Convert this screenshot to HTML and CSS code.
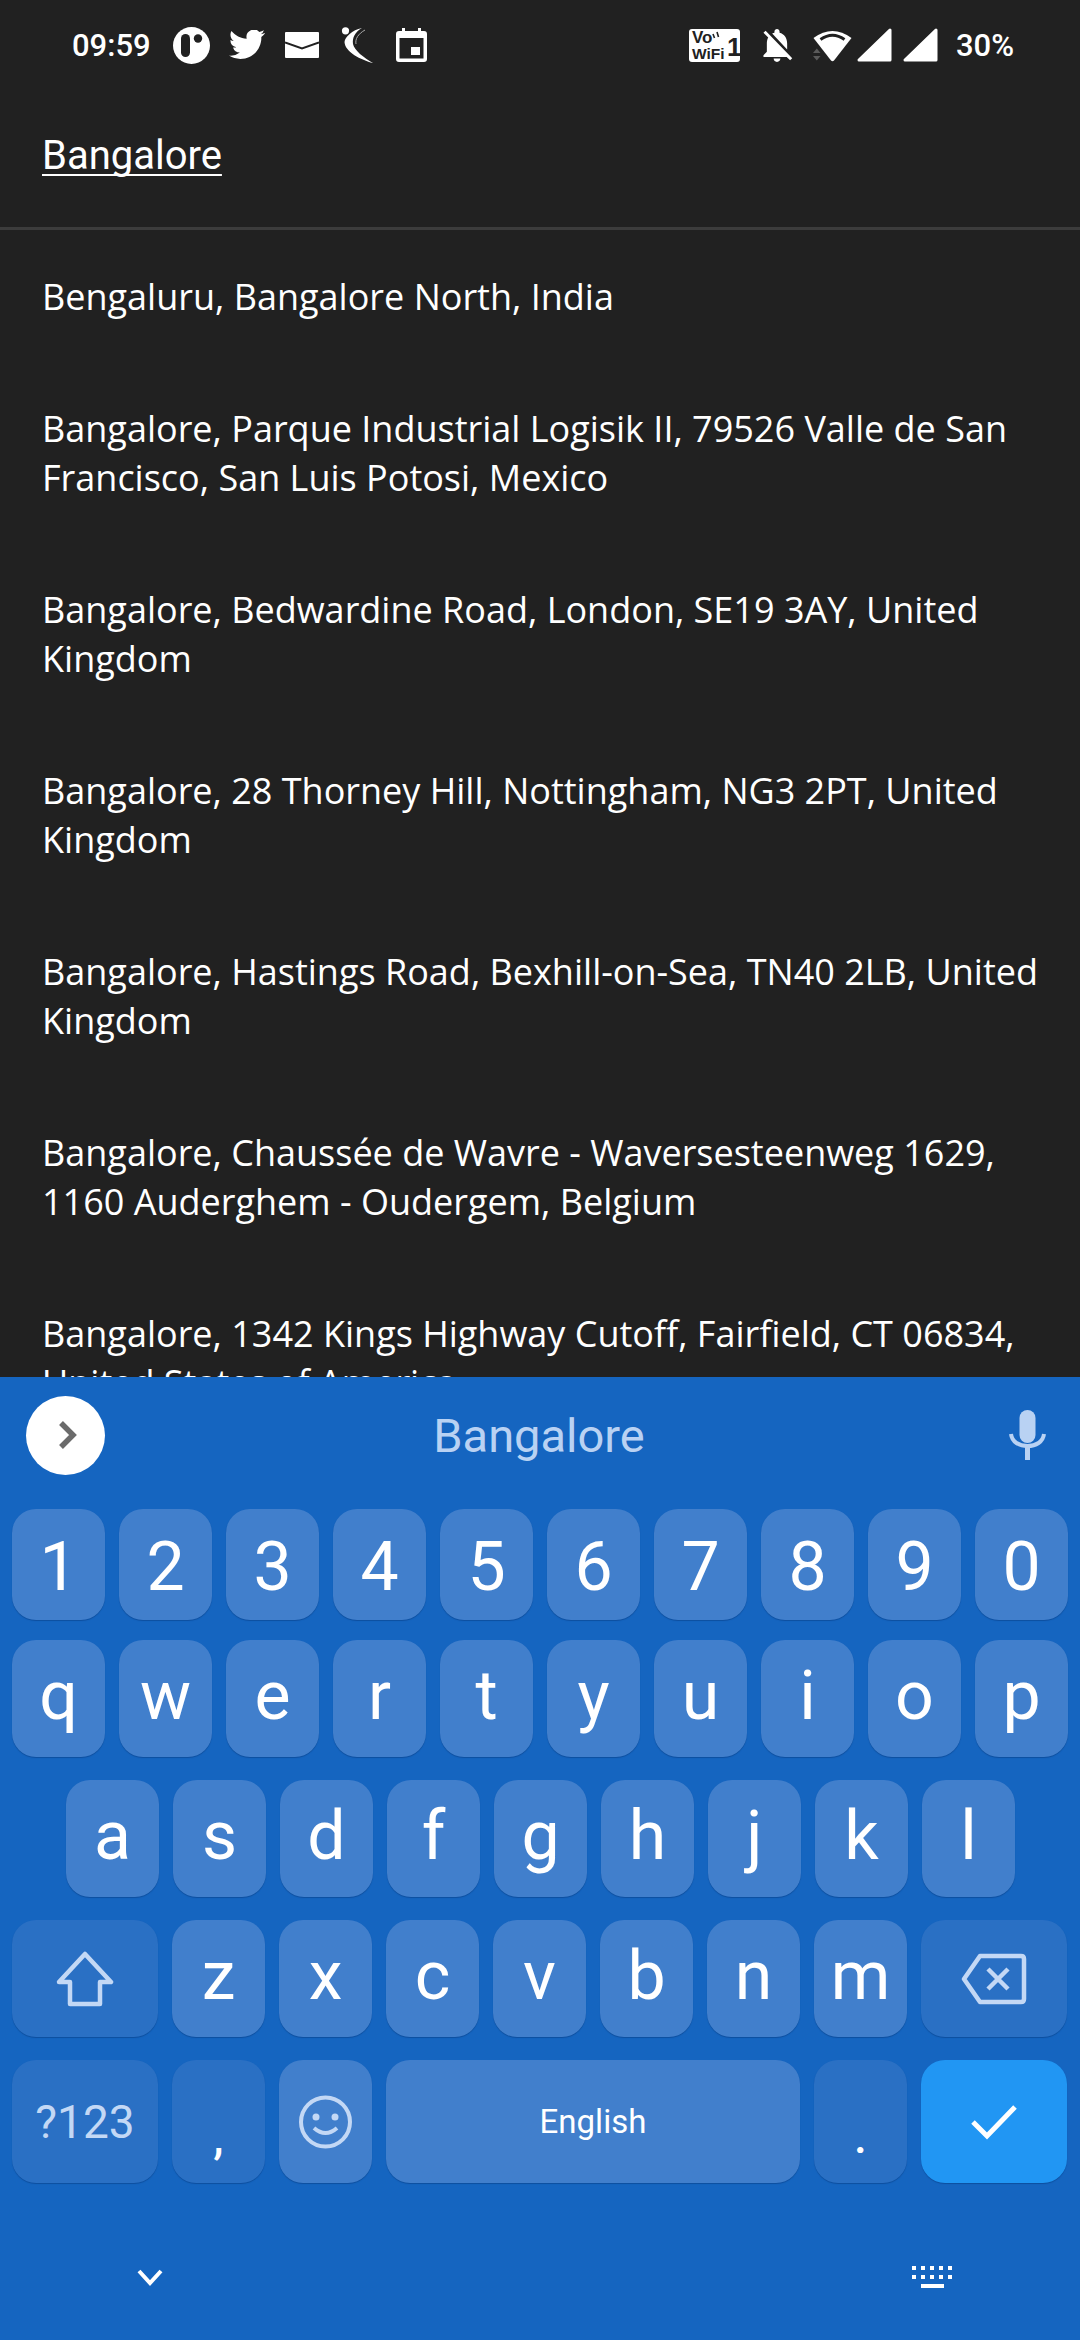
FILE: index.html
```html
<!DOCTYPE html>
<html lang="en">
<head>
<meta charset="utf-8">
<title>Bangalore search</title>
<link rel="stylesheet" href="styles.css">
</head>
<body>
<div class="screen">
  <div class="status">
    <div class="status-left">
      <span class="time">09:59</span>
      <span class="slot"><svg width="37" height="37" viewBox="0 0 37 37"><circle cx="18.5" cy="18.5" r="18.5" fill="#fff"/><rect x="8" y="7" width="9" height="23" rx="4.5" fill="#212121"/><circle cx="25" cy="11.5" r="4.2" fill="#212121"/></svg></span>
      <span class="slot"><svg width="36" height="30" viewBox="0 0 24 20"><path transform="translate(0 -2.5)" fill="#fff" d="M23.95 4.57a10 10 0 0 1-2.82.77 4.96 4.96 0 0 0 2.16-2.72 9.9 9.9 0 0 1-3.12 1.18 4.92 4.92 0 0 0-8.38 4.48C7.69 8.1 4.07 6.13 1.64 3.16a4.82 4.82 0 0 0-.67 2.48 4.92 4.92 0 0 0 2.19 4.1 4.9 4.9 0 0 1-2.23-.62v.06a4.92 4.92 0 0 0 3.95 4.83 5 5 0 0 1-2.21.08 4.94 4.94 0 0 0 4.6 3.42A9.87 9.87 0 0 1 0 19.54a14 14 0 0 0 7.56 2.21c9.05 0 14-7.5 14-13.98 0-.21 0-.42-.02-.63a9.94 9.94 0 0 0 2.46-2.55z"/></svg></span>
      <span class="slot"><svg width="34" height="26" viewBox="0 0 34 26"><rect width="34" height="26" rx="1" fill="#fff"/><path d="M0 10.5 L17 16.5 L34 10.5" fill="none" stroke="#212121" stroke-width="2"/></svg></span>
      <span class="slot"><svg width="32" height="36" viewBox="0 0 32 36"><circle cx="4.5" cy="3.8" r="3.6" fill="#fff"/><path d="M21 1 C14 5 11 11 12 17 C13 23 23 31 32 36 C20 33 4 25 3.500 15 C4 10 11 3 21 1Z" fill="#fff"/><path d="M24 3 C17 7 14 12 15 17" fill="none" stroke="#aaa" stroke-width="1"/></svg></span>
      <span class="slot"><svg width="31" height="34" viewBox="0 0 31 34"><path fill="#fff" fill-rule="evenodd" d="M6 0h3v3h13V0h3v3h3a3 3 0 0 1 3 3v25a3 3 0 0 1-3 3H3a3 3 0 0 1-3-3V6a3 3 0 0 1 3-3h3zM3.500 10v20.500h24V10z"/><rect x="15" y="19" width="9" height="8" fill="#fff"/></svg></span>
    </div>
    <div class="status-right">
      <svg class="vowifi" width="51" height="33" viewBox="0 0 51 33"><rect width="51" height="33" rx="3" fill="#fff"/><text class="vw-a" x="3" y="14">Vo</text><path d="M24 5 L25.500 9 M28 3 L29.500 8" stroke="#212121" stroke-width="1.600" fill="none"/><text class="vw-b" x="3" y="30">WiFi</text><text class="vw-c" x="38" y="27">1</text></svg>
      <svg class="bell" width="32" height="33" viewBox="3 2.500 18 19.500"><path fill="#fff" d="M20 18.690L7.840 6.140 5.270 3.490 4 4.760l2.800 2.800v.01c-.52.99-.8 2.160-.8 3.420v5l-2 2v1h13.730l2 2L21 19.720l-1-1.030zM12 22c1.110 0 2-.89 2-2h-4c0 1.110.89 2 2 2zm6-7.320V11c0-3.080-1.640-5.640-4.500-6.320V4c0-.83-.67-1.500-1.500-1.500s-1.500.67-1.500 1.500v.68c-.15.03-.29.08-.42.12-.1.03-.2.07-.3.11h-.01c-.2.08-.4.17-.59.27-.01 0-.01 0-.02.01L18 14.680z"/></svg>
      <svg class="wifi" width="39" height="33" viewBox="0 0 39 33"><path fill="#fff" d="M0.500 9 Q19.500 -5 38.500 9 L21 31.500 Q19.500 33 18 31.500 Z"/><path d="M7.500 10.500 Q19.500 2 31.500 10.500" fill="none" stroke="#212121" stroke-width="3"/><path d="M0 24 L3.800 19.500 L7.500 24Z M0 27 L7.500 27 L3.800 31.500Z" fill="#5a5a5a"/></svg>
      <svg class="signal" width="35" height="34" viewBox="0 0 35 34"><path d="M2 32 L33 2 V32 Z" fill="#fff" stroke="#fff" stroke-width="3" stroke-linejoin="round"/></svg>
      <svg class="signal signal-b" width="35" height="34" viewBox="0 0 35 34"><path d="M2 32 L33 2 V32 Z" fill="#fff" stroke="#fff" stroke-width="3" stroke-linejoin="round"/></svg>
      <span class="battery">30%</span>
    </div>
  </div>

  <div class="search-head"><span class="query">Bangalore</span></div>

  <div class="results">
    <div class="result">Bengaluru, Bangalore North, India</div>
    <div class="result">Bangalore, Parque Industrial Logisik II, 79526 Valle de San Francisco, San Luis Potosi, Mexico</div>
    <div class="result">Bangalore, Bedwardine Road, London, SE19 3AY, United Kingdom</div>
    <div class="result">Bangalore, 28 Thorney Hill, Nottingham, NG3 2PT, United Kingdom</div>
    <div class="result">Bangalore, Hastings Road, Bexhill-on-Sea, TN40 2LB, United Kingdom</div>
    <div class="result">Bangalore, Chaussée de Wavre - Waversesteenweg 1629, 1160 Auderghem - Oudergem, Belgium</div>
    <div class="result">Bangalore, 1342 Kings Highway Cutoff, Fairfield, CT 06834, United States of America</div>
  </div>

  <div class="keyboard">
    <div class="suggest">
      <span class="round"><svg width="19" height="30" viewBox="0 0 19 30"><path d="M3 3 L15 15 L3 27" fill="none" stroke="#6b6b6b" stroke-width="5.500"/></svg></span>
      <span class="typed">Bangalore</span>
      <svg class="mic" width="37" height="50" viewBox="0 0 37 50"><rect x="10.500" y="0" width="16" height="33" rx="8" fill="#b9d2f3"/><path d="M2 24 C3 32 10 36 18.500 36 C27 36 34 32 35 24" fill="none" stroke="#b9d2f3" stroke-width="4"/><rect x="16" y="36" width="5" height="14" fill="#b9d2f3"/></svg>
    </div>

    <div class="row row-num">
      <span class="key">1</span><span class="key">2</span><span class="key">3</span><span class="key">4</span><span class="key">5</span><span class="key">6</span><span class="key">7</span><span class="key">8</span><span class="key">9</span><span class="key">0</span>
    </div>
    <div class="row">
      <span class="key">q</span><span class="key">w</span><span class="key">e</span><span class="key">r</span><span class="key">t</span><span class="key">y</span><span class="key">u</span><span class="key">i</span><span class="key">o</span><span class="key">p</span>
    </div>
    <div class="row row-home">
      <span class="key">a</span><span class="key">s</span><span class="key">d</span><span class="key">f</span><span class="key">g</span><span class="key">h</span><span class="key">j</span><span class="key">k</span><span class="key">l</span>
    </div>
    <div class="row">
      <span class="key key-wide key-fn"><svg width="58" height="56" viewBox="0 0 58 56"><path d="M29 3 L55 31 H44 V53 H14 V31 H3 Z" fill="none" stroke="#c3d8f5" stroke-width="4.500" stroke-linejoin="round"/></svg></span>
      <span class="key">z</span><span class="key">x</span><span class="key">c</span><span class="key">v</span><span class="key">b</span><span class="key">n</span><span class="key">m</span>
      <span class="key key-wide key-fn"><svg width="66" height="52" viewBox="0 0 66 52"><path d="M19 3 H60 Q63 3 63 6 V46 Q63 49 60 49 H19 L3 26 Z" fill="none" stroke="#c3d8f5" stroke-width="4.500" stroke-linejoin="round"/><path d="M27 16 L47 36 M47 16 L27 36" stroke="#c3d8f5" stroke-width="4.500"/></svg></span>
    </div>
    <div class="row row-bottom">
      <span class="key key-wide key-fn key-sym">?123</span>
      <span class="key key-fn key-punct">,</span>
      <span class="key"><svg width="53" height="54" viewBox="0 0 53 54"><circle cx="26.500" cy="27" r="24.500" fill="none" stroke="#c3d8f5" stroke-width="4"/><circle cx="17" cy="22" r="3.500" fill="#c3d8f5"/><circle cx="36" cy="22" r="3.500" fill="#c3d8f5"/><path d="M15 33 Q26.500 43 38 33" fill="none" stroke="#c3d8f5" stroke-width="4"/></svg></span>
      <span class="key key-space">English</span>
      <span class="key key-fn key-punct">.</span>
      <span class="key key-wide key-enter"><svg width="46" height="36" viewBox="0 0 46 36"><path d="M2 18 L16 32 L44 3" fill="none" stroke="#fff" stroke-width="5"/></svg></span>
    </div>

    <div class="nav-row">
      <svg width="26" height="17" viewBox="0 0 26 17"><path d="M2 2 L13 14 L24 2" fill="none" stroke="#fff" stroke-width="4"/></svg>
      <svg width="41" height="23" viewBox="0 0 41 23"><path fill="#fff" d="M0 0h4v4H0zM9 0h4v4H9zM18 0h4v4h-4zM27 0h4v4h-4zM36 0h4v4h-4zM0 9h4v4H0zM9 9h4v4H9zM18 9h4v4h-4zM27 9h4v4h-4zM36 9h4v4h-4zM9 18h23v4H9z"/></svg>
    </div>
  </div>
</div>
</body>
</html>
```

FILE: styles.css
```css
* { box-sizing: border-box; }
html, body { margin: 0; padding: 0; }
body { background: #212121; }

.screen {
  width: 1080px;
  height: 2340px;
  display: flex;
  flex-direction: column;
  overflow: hidden;
  background: #212121;
  color: #fff;
  font-family: Roboto, sans-serif;
}

/* status bar */
.status {
  height: 90px;
  flex: none;
  display: flex;
  align-items: center;
  justify-content: space-between;
  padding: 0 66px 0 72px;
}
.status-left, .status-right { display: flex; align-items: center; }
.time { font-size: 31px; font-weight: 500; width: 92px; }
.slot { width: 55px; display: flex; justify-content: center; }
.bell { margin-left: 21px; }
.wifi { margin-left: 20px; }
.signal { margin-left: 5px; }
.signal-b { margin-left: 11px; }
.battery { font-size: 31px; font-weight: 500; margin-left: 18px; }
.vw-a { font: 700 17px "Liberation Sans", sans-serif; fill: #212121; }
.vw-b { font: 700 15.500px "Liberation Sans", sans-serif; fill: #212121; }
.vw-c { font: 700 26px "Liberation Sans", sans-serif; fill: #212121; }

/* search field */
.search-head {
  height: 140px;
  flex: none;
  padding: 42px 42px 0;
  border-bottom: 3px solid #3c3c3c;
}
.query {
  font-size: 40px;
  text-decoration: underline;
  text-decoration-thickness: 2px;
  text-decoration-skip-ink: none;
  text-underline-offset: 5px;
}

/* results */
.results {
  flex: 1;
  min-height: 0;
  overflow: hidden;
  padding: 42px 40px 0 42px;
  display: flex;
  flex-direction: column;
  gap: 83px;
  font-family: "Open Sans", sans-serif;
  font-size: 36px;
  line-height: 49px;
}
.result { flex: none; }

/* keyboard */
.keyboard {
  height: 963px;
  flex: none;
  background: #1565c0;
  padding: 0 12px;
}
.suggest {
  height: 132px;
  display: flex;
  align-items: center;
  justify-content: space-between;
  padding: 0 22px 16px 14px;
}
.round {
  width: 79px;
  height: 79px;
  border-radius: 50%;
  background: #fff;
  display: flex;
  align-items: center;
  justify-content: center;
  padding-left: 3px;
}
.typed { font-size: 47px; color: #b9d2f3; margin-right: 36px; }
.mic { flex: none; }

.row { height: 140px; display: flex; gap: 14px; align-items: flex-start; }
.row-num { height: 131px; }
.row-home { padding-left: 54px; }

.key {
  flex: none;
  width: 93px;
  height: 117px;
  border-radius: 24px;
  background: #417fcc;
  box-shadow: 0 1px 1px #0d4f9f;
  display: flex;
  align-items: center;
  justify-content: center;
  font-size: 68px;
  padding-bottom: 5px;
}
.row-num .key { height: 111px; padding: 5px 0 0; }
.row-bottom .key { height: 123px; padding: 0; }
.key-wide { width: 146px; padding: 0; }
.key-fn { background: #2a70c4; }
.key-sym { font-size: 46px; color: #c3d8f5; }
.key-space { width: 414px; font-size: 33px; background: #417fcc; }
.key-enter { background: #2196f3; }
.row-bottom .key-punct { font-size: 46px; font-weight: 500; padding-top: 30px; }

.nav-row {
  display: flex;
  align-items: center;
  justify-content: space-between;
  padding: 66px 115px 0 125px;
}
```
